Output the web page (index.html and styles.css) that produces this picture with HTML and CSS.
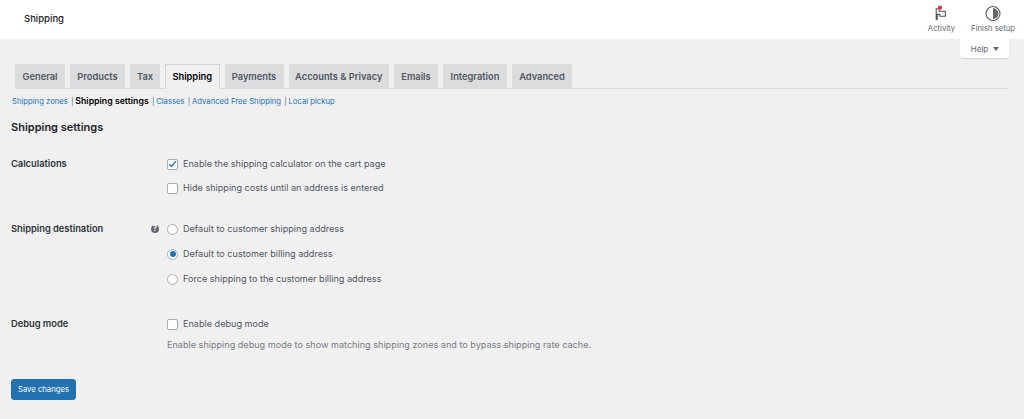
FILE: index.html
```html
<!DOCTYPE html>
<html lang="en">
<head>
<meta charset="utf-8">
<title>Shipping settings</title>
<link rel="stylesheet" href="styles.css">
</head>
<body>
<header class="topbar">
  <h1 class="page-title">Shipping</h1>
  <div class="top-actions">
    <div class="top-action activity">
      <svg class="top-icon" width="18" height="18" viewBox="0 0 18 18" aria-hidden="true">
        <path d="M4.2 14.5V3.8h3v2.4h6.2v5H7.8V9.4H5.2v5.1z" fill="none" stroke="#555" stroke-width="1.1"/>
        <circle cx="8" cy="2.6" r="2.2" fill="#c9444a"/>
      </svg>
      <span>Activity</span>
    </div>
    <div class="top-action finish">
      <svg class="top-icon" width="18" height="18" viewBox="0 0 18 18" aria-hidden="true">
        <circle cx="9" cy="8.5" r="7" fill="none" stroke="#555" stroke-width="1.1"/>
        <path d="M9 3.1a5.4 5.4 0 0 1 0 10.8z" fill="#666"/>
      </svg>
      <span>Finish setup</span>
    </div>
  </div>
</header>
<div class="help-row"><button class="help-tab" type="button">Help <span class="caret"></span></button></div>
<nav class="tabs">
  <a class="tab t1">General</a>
  <a class="tab t2">Products</a>
  <a class="tab t3">Tax</a>
  <a class="tab t4 active">Shipping</a>
  <a class="tab t5">Payments</a>
  <a class="tab t6">Accounts &amp; Privacy</a>
  <a class="tab t7">Emails</a>
  <a class="tab t8">Integration</a>
  <a class="tab t9">Advanced</a>
</nav>
<ul class="subnav">
  <li><a>Shipping zones</a><span class="sep">|</span></li>
  <li><strong>Shipping settings</strong><span class="sep">|</span></li>
  <li><a>Classes</a><span class="sep">|</span></li>
  <li><a>Advanced Free Shipping</a><span class="sep">|</span></li>
  <li><a>Local pickup</a></li>
</ul>
<main class="content">
  <h2 class="section-title">Shipping settings</h2>
  <section class="row calc">
    <div class="row-label">Calculations</div>
    <div class="row-help"></div>
    <div class="options tight">
      <label class="option"><span class="box checked"><svg width="10" height="10" viewBox="0 0 10 10" aria-hidden="true"><path d="M1.6 5.2l2.4 2.6 4.6-6" fill="none" stroke="#2271b1" stroke-width="1.5"/></svg></span>Enable the shipping calculator on the cart page</label>
      <label class="option"><span class="box"></span>Hide shipping costs until an address is entered</label>
    </div>
  </section>
  <section class="row dest">
    <div class="row-label">Shipping destination</div>
    <div class="row-help"><span class="help-dot">?</span></div>
    <div class="options">
      <label class="option"><span class="radio"></span>Default to customer shipping address</label>
      <label class="option"><span class="radio on"></span>Default to customer billing address</label>
      <label class="option"><span class="radio"></span>Force shipping to the customer billing address</label>
    </div>
  </section>
  <section class="row debug">
    <div class="row-label">Debug mode</div>
    <div class="row-help"></div>
    <div class="options">
      <label class="option"><span class="box"></span>Enable debug mode</label>
      <p class="desc">Enable shipping debug mode to show matching shipping zones and to bypass shipping rate cache.</p>
    </div>
  </section>
  <button class="save" type="button">Save changes</button>
</main>
</body>
</html>
```
FILE: styles.css
```css
* { box-sizing: border-box; }
html, body { margin: 0; padding: 0; }
body {
  width: 1024px;
  height: 419px;
  overflow: hidden;
  background: #f0f0f1;
  color: #3c434a;
  font-family: Inter, "Liberation Sans", sans-serif;
  font-size: 9.1px;
  line-height: 12px;
}
.topbar {
  height: 39px;
  background: #fff;
  display: flex;
  justify-content: space-between;
  align-items: flex-start;
  padding: 0 9px 0 24px;
}
.page-title {
  margin: 13px 0 0;
  font-size: 9.5px;
  line-height: 12px;
  font-weight: 500;
  color: #1d2327;
}
.top-actions { display: flex; gap: 16px; padding-top: 5px; }
.top-action {
  display: flex;
  flex-direction: column;
  align-items: center;
  gap: 1px;
  font-size: 7.7px;
  line-height: 10px;
  color: #646970;
}
.top-icon { display: block; }
.help-row { height: 19px; display: flex; justify-content: flex-end; padding-right: 15px; }
.help-tab {
  width: 49px;
  height: 19px;
  padding: 0 0 0 1px;
  border: 0;
  border-radius: 0 0 3px 3px;
  background: #fff;
  box-shadow: 0 1px 1px rgba(0,0,0,.12);
  font: inherit;
  font-size: 8px;
  color: #646970;
  display: flex;
  align-items: center;
  justify-content: center;
  gap: 5px;
}
.caret {
  width: 0;
  height: 0;
  border-left: 3px solid transparent;
  border-right: 3px solid transparent;
  border-top: 4px solid #646970;
}
.tabs {
  margin: 6px 16px 0 15px;
  height: 25px;
  display: flex;
  gap: 5px;
  border-bottom: 1px solid #dcdcde;
}
.tab {
  height: 24px;
  background: #dcdcde;
  border: 1px solid #dcdcde;
  border-bottom: 0;
  color: #50575e;
  font-size: 9.3px;
  font-weight: 600;
  line-height: 23px;
  text-align: center;
}
.tab.active {
  height: 25px;
  background: #f0f0f1;
  border-color: #d0d1d4;
  color: #000;
}
.t1 { width: 50px; }
.t2 { width: 55px; }
.t3 { width: 30px; }
.t4 { width: 54.5px; }
.t5 { width: 59px; }
.t6 { width: 100.5px; }
.t7 { width: 44px; }
.t8 { width: 64px; }
.t9 { width: 60px; }
.subnav {
  list-style: none;
  margin: 6px 0 0 12px;
  padding: 0;
  display: flex;
  font-size: 7.7px;
  line-height: 13px;
  color: #2271b1;
}
.subnav a { color: #2271b1; }
.subnav strong { color: #000; font-weight: 600; font-size: 8.75px; }
.sep { color: #646970; margin: 0 1.7px 0 3.2px; }
.content { padding-left: 11px; }
.section-title {
  margin: 12px 0 0;
  font-size: 11px;
  line-height: 14px;
  font-weight: 600;
  color: #1d2327;
}
.row { display: flex; }
.row.calc { margin-top: 24px; }
.row.dest { margin-top: 29px; }
.row.debug { margin-top: 33px; }
.row-label {
  width: 140px;
  font-size: 9.3px;
  font-weight: 600;
  color: #2c3338;
  line-height: 12px;
}
.row-help { width: 16px; }
.help-dot {
  display: block;
  width: 8px;
  height: 8px;
  margin-top: 2px;
  border-radius: 50%;
  background: #646970;
  color: #fff;
  font-size: 7px;
  font-weight: 700;
  line-height: 8px;
  text-align: center;
}
.options { display: flex; flex-direction: column; gap: 13px; }
.options.tight { gap: 12px; }
.option { display: flex; align-items: center; height: 12px; color: #50575e; }
.box, .radio {
  flex: none;
  width: 11px;
  height: 11px;
  margin-right: 5px;
  background: #fff;
  border: 1px solid #a7aaad;
  display: flex;
  align-items: center;
  justify-content: center;
}
.box { border-radius: 2px; }
.radio { border-radius: 50%; }
.radio.on::after {
  content: "";
  width: 6px;
  height: 6px;
  border-radius: 50%;
  background: #2271b1;
}
.desc { margin: -4px 0 0; color: #787c82; }
.save {
  display: block;
  margin-top: 28px;
  width: 65px;
  height: 21px;
  padding: 0;
  border: 1px solid #2271b1;
  border-radius: 3px;
  background: #2271b1;
  color: #fff;
  font: inherit;
  font-size: 7.7px;
}
```
